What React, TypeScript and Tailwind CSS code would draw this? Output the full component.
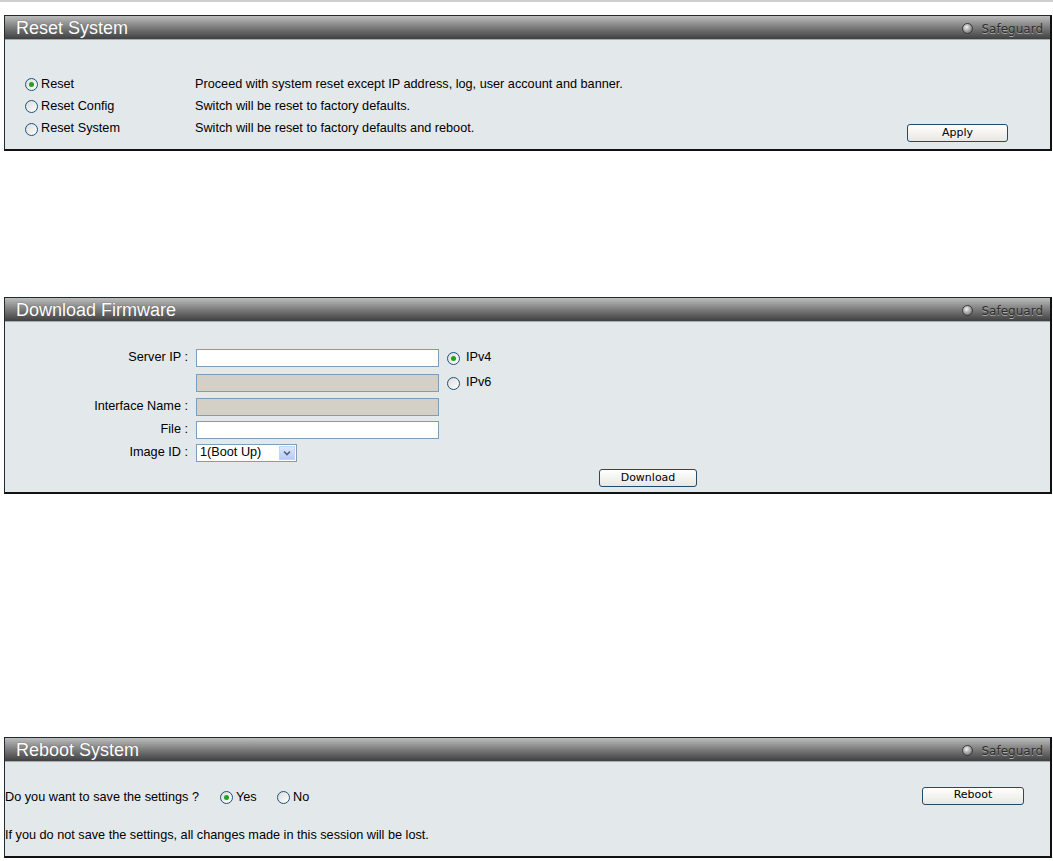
import React from "react";

const F = { fontFamily: '"Liberation Sans", Arial, sans-serif' };

function Radio({ checked }: { checked?: boolean }) {
  return (
    <span className="inline-flex w-[13px] h-[13px] rounded-full border border-[#1c5180] bg-gradient-to-br from-[#dcdcd7] to-white items-center justify-center shrink-0">
      {checked && <span className="w-[5px] h-[5px] rounded-full bg-[#21a121]" />}
    </span>
  );
}

function Btn({ label, w }: { label: string; w: string }) {
  return (
    <div
      className={`${w} h-[18px] rounded-[3px] border border-[#23496b] bg-gradient-to-b from-white to-[#e8e7e2] flex items-center justify-center text-[11px] text-black`}
      style={{ fontFamily: '"DejaVu Sans", Verdana, sans-serif' }}
    >
      {label}
    </div>
  );
}

function Header({ title }: { title: string }) {
  return (
    <div className="h-[24px] bg-gradient-to-b from-[#bdbdbd] via-[#7c7c7c] to-[#404040] border-b border-[#a6adb1] flex items-center justify-between pl-[11px] pr-[7px]">
      <span className="text-white text-[18px] leading-none [text-shadow:0_0_1px_#555]" style={F}>
        {title}
      </span>
      <div className="flex items-center gap-[9px] mt-[2px]">
        <span className="w-[11px] h-[11px] rounded-full border border-[#3a3a3a] bg-[radial-gradient(circle_at_40%_35%,#f4f4f4,#9a9a9a_55%,#505050)]" />
        <span
          className="text-[12px] text-[#2e2e2e] [text-shadow:0_1px_0_#a8a8a8]"
          style={{ fontFamily: '"DejaVu Sans", Verdana, sans-serif' }}
        >
          Safeguard
        </span>
      </div>
    </div>
  );
}

function Panel({ title, children }: { title: string; children: React.ReactNode }) {
  return (
    <div className="ml-[4px] w-[1048px] border-t border-l border-[#1e2a36] border-r-2 border-b-2 border-r-[#111] border-b-[#111] bg-[#e3e8eb]">
      <Header title={title} />
      {children}
    </div>
  );
}

function Input({ disabled }: { disabled?: boolean }) {
  return (
    <div
      className={`w-[243px] h-[18px] border border-[#7f9db9] ${disabled ? "bg-[#d4d0c8]" : "bg-white"}`}
    />
  );
}

export default function App() {
  return (
    <div className="w-[1053px] h-[861px] bg-white text-[12.7px] text-black" style={F}>
      <div className="h-[2px] bg-[#cfcfcf]" />
      <div className="h-[13px]" />
      <Panel title="Reset System">
        <div className="pt-[34px] pb-[5px] pl-[20px]">
          <div className="flex items-center h-[22px]">
            <div className="flex items-center gap-[3px] w-[170px]">
              <Radio checked />
              <span>Reset</span>
            </div>
            <span>Proceed with system reset except IP address, log, user account and banner.</span>
          </div>
          <div className="flex items-center h-[22px]">
            <div className="flex items-center gap-[3px] w-[170px]">
              <Radio />
              <span>Reset Config</span>
            </div>
            <span>Switch will be reset to factory defaults.</span>
          </div>
          <div className="flex h-[26px]">
            <div className="flex items-center gap-[3px] w-[170px] h-[22px]">
              <Radio />
              <span>Reset System</span>
            </div>
            <div className="flex items-center h-[22px] w-[712px]">
              <span>Switch will be reset to factory defaults and reboot.</span>
            </div>
            <div className="self-end mb-[2px]">
              <Btn label="Apply" w="w-[101px]" />
            </div>
          </div>
        </div>
      </Panel>
      <div className="h-[146px]" />
      <Panel title="Download Firmware">
        <div className="pt-[27px] pb-[5px]">
          <div className="flex items-center h-[18px]">
            <span className="w-[191px] text-right pr-[8px]">Server IP :</span>
            <Input />
            <div className="flex items-center gap-[6px] ml-[8px]">
              <Radio checked />
              <span>IPv4</span>
            </div>
          </div>
          <div className="flex items-center h-[18px] mt-[7px]">
            <span className="w-[191px]" />
            <Input disabled />
            <div className="flex items-center gap-[6px] ml-[8px]">
              <Radio />
              <span>IPv6</span>
            </div>
          </div>
          <div className="flex items-center h-[18px] mt-[6px]">
            <span className="w-[191px] text-right pr-[8px]">Interface Name :</span>
            <Input disabled />
          </div>
          <div className="flex items-center h-[18px] mt-[5px]">
            <span className="w-[191px] text-right pr-[8px]">File :</span>
            <Input />
          </div>
          <div className="flex items-center h-[18px] mt-[5px]">
            <span className="w-[191px] text-right pr-[8px]">Image ID :</span>
            <div className="w-[101px] h-[18px] border border-[#7f9db9] bg-white flex items-center justify-between pl-[3px] pr-[1px]">
              <span>1(Boot Up)</span>
              <span className="w-[16px] h-[14px] bg-gradient-to-b from-[#dce7fd] to-[#b6cbf5] border border-[#c3d3fd] flex items-center justify-center">
                <svg width="8" height="6" viewBox="0 0 8 6">
                  <path d="M1 1.5 L4 4.5 L7 1.5" stroke="#4d6185" strokeWidth="1.6" fill="none" />
                </svg>
              </span>
            </div>
          </div>
          <div className="flex h-[18px] mt-[7px] pl-[594px]">
            <Btn label="Download" w="w-[98px]" />
          </div>
        </div>
      </Panel>
      <div className="h-[243px]" />
      <Panel title="Reboot System">
        <div className="pt-[26px] pb-[10px]">
          <div className="flex items-center h-[20px]">
            <span className="w-[215px]">Do you want to save the settings ?</span>
            <div className="flex items-center gap-[3px] w-[57px]">
              <Radio checked />
              <span>Yes</span>
            </div>
            <div className="flex items-center gap-[3px] w-[645px]">
              <Radio />
              <span>No</span>
            </div>
            <div className="-mt-[5px]">
              <Btn label="Reboot" w="w-[102px]" />
            </div>
          </div>
          <div className="flex items-center h-[20px] mt-[18px]">
            <span>If you do not save the settings, all changes made in this session will be lost.</span>
          </div>
        </div>
      </Panel>
    </div>
  );
}
